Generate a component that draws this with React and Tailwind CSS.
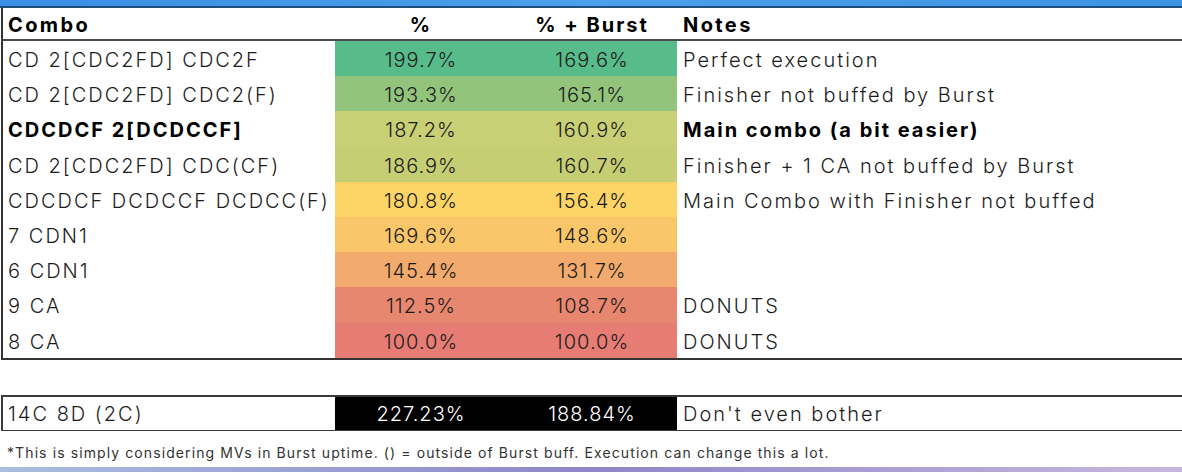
import React from 'react'

const rows = [
  { combo: 'CD 2[CDC2FD] CDC2F', a: '199.7%', b: '169.6%', note: 'Perfect execution', bg: 'bg-[#57bb8a]' },
  { combo: 'CD 2[CDC2FD] CDC2(F)', a: '193.3%', b: '165.1%', note: 'Finisher not buffed by Burst', bg: 'bg-[#92c47c]' },
  { combo: 'CDCDCF 2[DCDCCF]', a: '187.2%', b: '160.9%', note: 'Main combo (a bit easier)', bg: 'bg-[#c8cf74]', bold: true },
  { combo: 'CD 2[CDC2FD] CDC(CF)', a: '186.9%', b: '160.7%', note: 'Finisher + 1 CA not buffed by Burst', bg: 'bg-[#c6ce74]' },
  { combo: 'CDCDCF DCDCCF DCDCC(F)', a: '180.8%', b: '156.4%', note: 'Main Combo with Finisher not buffed', bg: 'bg-[#fdd466]' },
  { combo: '7 CDN1', a: '169.6%', b: '148.6%', note: '', bg: 'bg-[#f9c66a]' },
  { combo: '6 CDN1', a: '145.4%', b: '131.7%', note: '', bg: 'bg-[#f2ab6d]' },
  { combo: '9 CA', a: '112.5%', b: '108.7%', note: 'DONUTS', bg: 'bg-[#e8876f]' },
  { combo: '8 CA', a: '100.0%', b: '100.0%', note: 'DONUTS', bg: 'bg-[#e67c73]' },
]

function Row({ r }) {
  const weight = r.bold ? 'font-bold text-black' : 'font-light text-[#1c1c1c]'
  return (
    <div className="flex h-[35.2px] items-center text-[20px]">
      <div className={`w-[332px] pl-[5px] pt-[3px] whitespace-nowrap tracking-[2px] ${weight}`}>{r.combo}</div>
      <div className={`flex h-full w-[342px] pt-[3px] font-light tracking-[1px] text-[#1c1c1c] ${r.bg}`}>
        <div className="flex w-[172px] items-center justify-center">{r.a}</div>
        <div className="flex w-[170px] items-center justify-center">{r.b}</div>
      </div>
      <div className={`pl-[6px] pt-[3px] whitespace-nowrap tracking-[2px] ${weight}`}>{r.note}</div>
    </div>
  )
}

export default function App() {
  return (
    <div className="flex h-[472px] w-[1182px] flex-col overflow-hidden bg-white font-['Inter','Liberation_Sans',sans-serif]">
      <div className="h-[8px] shrink-0 border-b-2 border-[#1d4f7c] bg-gradient-to-r from-[#3a8ee3] via-[#4aa0ea] to-[#3d94e4]" />

      <div className="ml-[1px] border-l-2 border-b-2 border-[#333]">
        <div className="flex h-[33px] items-center border-b-2 border-[#4a4a4a] pt-[3px] text-[20px] font-bold text-black">
          <div className="w-[332px] pl-[5px] tracking-[2.4px]">Combo</div>
          <div className="w-[172px] text-center tracking-[2px]">%</div>
          <div className="w-[170px] text-center tracking-[2px]">% + Burst</div>
          <div className="pl-[6px] tracking-[2.4px]">Notes</div>
        </div>
        {rows.map((r) => (
          <Row key={r.combo} r={r} />
        ))}
      </div>

      <div className="h-[35px] shrink-0" />

      <div className="ml-[1px] flex h-[36px] shrink-0 items-center border-l-2 border-t-2 border-b border-[#3a3a3a] text-[20px] font-light text-[#1c1c1c]">
        <div className="w-[332px] pl-[5px] pt-[2px] tracking-[2px]">14C 8D (2C)</div>
        <div className="flex h-full w-[342px] bg-black pt-[2px] tracking-[1px] text-white">
          <div className="flex w-[172px] items-center justify-center">227.23%</div>
          <div className="flex w-[170px] items-center justify-center">188.84%</div>
        </div>
        <div className="pl-[6px] pt-[2px] tracking-[2px]">Don't even bother</div>
      </div>

      <div className="flex-1 pl-[7px] pt-[11px] text-[14px] tracking-[1.1px] text-[#333]">
        *This is simply considering MVs in Burst uptime. () = outside of Burst buff. Execution can change this a lot.
      </div>

      <div className="h-[5px] shrink-0 bg-gradient-to-r from-[#a9bde0] via-[#8f86c9] to-[#c7b7de]" />
    </div>
  )
}
